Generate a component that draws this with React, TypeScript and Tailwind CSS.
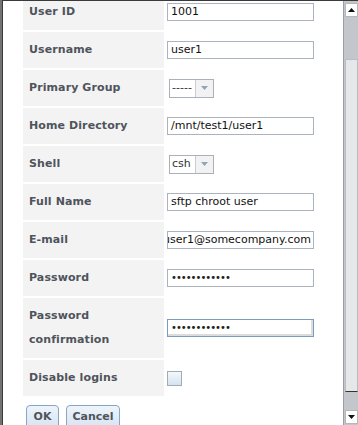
import React from 'react';

const labelCls =
  'w-[141px] shrink-0 bg-[#f3f3f3] px-[6px] py-[6px] text-[11px] leading-[24px] font-bold text-[#4f545c] tracking-[0.1px] flex items-center';

function TextBox({ value, focused = false, alignEnd = false }: { value: string; focused?: boolean; alignEnd?: boolean }) {
  return (
    <div
      className={`w-[147px] h-[18px] bg-white flex items-center overflow-hidden whitespace-nowrap px-[3px] text-[11px] text-[#111] ${
        alignEnd ? 'justify-end pr-[2px]' : ''
      } ${focused ? 'border border-[#7d9bbd] shadow-[inset_-2px_-2px_0_#dcdcdc]' : 'border border-[#aab3be]'}`}
    >
      {value}
    </div>
  );
}

function Dots({ focused = false }: { focused?: boolean }) {
  return (
    <div
      className={`w-[147px] h-[18px] bg-white flex items-center px-[3px] ${
        focused ? 'border border-[#7d9bbd] shadow-[inset_-2px_-2px_0_#dcdcdc]' : 'border border-[#aab3be]'
      }`}
    >
      <span className="text-[10px] tracking-[-1px] text-[#222] leading-none">••••••••••••</span>
    </div>
  );
}

function Select({ value }: { value: string }) {
  return (
    <div className="ml-[2px] h-[19px] flex border border-[#aab1ba] bg-white">
      <div className="w-[25px] flex items-center px-[2px] text-[11px] text-[#333] font-medium">{value}</div>
      <div className="w-[18px] border-l border-[#c9cdd2] bg-[#f2f2f2] flex items-center justify-center">
        <svg width="7" height="4" viewBox="0 0 7 4">
          <path d="M0 0 L7 0 L3.5 4 Z" fill="#8ea4bf" />
        </svg>
      </div>
    </div>
  );
}

function Row({ label, children, tall = false }: { label: string; children: React.ReactNode; tall?: boolean }) {
  return (
    <div className={`flex ${tall ? 'h-[60px]' : 'h-[36px]'}`}>
      <div className={labelCls}>
        <span>{label}</span>
      </div>
      <div className="flex items-center pl-[3px]">{children}</div>
    </div>
  );
}

export default function App() {
  return (
    <div className="w-[358px] h-[425px] overflow-hidden flex bg-[#737373]" style={{ fontFamily: '"DejaVu Sans", sans-serif' }}>
      <div className="w-[2px] shrink-0" />
      <div className="flex-1 flex border-l border-t border-[#3a3a3a] bg-white">
        <div className="flex-1 overflow-hidden pl-[20px]">
          <div className="flex flex-col gap-[2px] mt-[-7px]">
            <Row label="User ID">
              <TextBox value="1001" />
            </Row>
            <Row label="Username">
              <TextBox value="user1" />
            </Row>
            <Row label="Primary Group">
              <Select value="-----" />
            </Row>
            <Row label="Home Directory">
              <TextBox value="/mnt/test1/user1" />
            </Row>
            <Row label="Shell">
              <Select value="csh" />
            </Row>
            <Row label="Full Name">
              <TextBox value="sftp chroot user" />
            </Row>
            <Row label="E-mail">
              <TextBox value="user1@somecompany.com" alignEnd />
            </Row>
            <Row label="Password">
              <Dots />
            </Row>
            <Row label="Password confirmation" tall>
              <Dots focused />
            </Row>
            <Row label="Disable logins">
              <div className="w-[15px] h-[15px] border border-[#a5abb3] bg-gradient-to-b from-[#f4f8fc] to-[#d3e3f1]" />
            </Row>
          </div>
          <div className="flex gap-[7px] mt-[9px] ml-[3px]">
            <button className="h-[24px] w-[33px] rounded-t-[4px] border border-[#86a6c8] bg-gradient-to-b from-[#eef4fa] to-[#d6e4f2] text-[11px] font-bold text-[#4f545c]">
              OK
            </button>
            <button className="h-[24px] w-[54px] rounded-t-[4px] border border-[#86a6c8] bg-gradient-to-b from-[#eef4fa] to-[#d6e4f2] text-[11px] font-bold text-[#4f545c]">
              Cancel
            </button>
          </div>
        </div>
        <div className="w-[15px] shrink-0 bg-[#c3c7cb] border-l border-[#9a9ea3] flex flex-col items-center pt-[2px] pb-[1px]">
          <div className="w-[13px] h-[14px] bg-white border border-[#b7b7b7] flex items-center justify-center">
            <svg width="7" height="4" viewBox="0 0 7 4">
              <path d="M0 4 L7 4 L3.5 0 Z" fill="#111" />
            </svg>
          </div>
          <div className="w-[13px] mt-[42px] h-[333px] bg-[#e6e7e8] border border-[#b9bcc0] border-b-[#333]" />
          <div className="flex-1" />
          <div className="w-[13px] h-[14px] bg-white border border-[#b7b7b7] flex items-center justify-center">
            <svg width="7" height="4" viewBox="0 0 7 4">
              <path d="M0 0 L7 0 L3.5 4 Z" fill="#111" />
            </svg>
          </div>
        </div>
      </div>
    </div>
  );
}
